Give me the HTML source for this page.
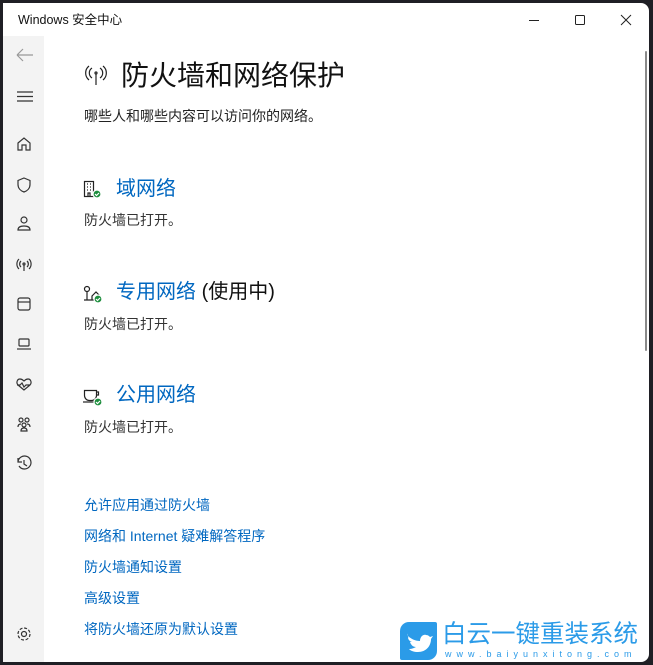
<!DOCTYPE html><html><head><meta charset="utf-8"><style>
*{margin:0;padding:0;box-sizing:border-box}
body{width:653px;height:665px;background:#1f1f25;position:relative;overflow:hidden;font-family:"Liberation Sans","Noto Sans CJK SC",sans-serif}
#win{position:absolute;left:3px;top:3px;width:646px;height:659px;background:#fff;border-radius:0 8px 8px 0;overflow:hidden}
#side{position:absolute;left:0;top:33px;width:41px;height:626px;background:#f3f3f3}
.t{position:absolute;white-space:nowrap;line-height:1}
.bl{color:#0067c0}
</style></head><body><div id="win">
<div class="t" style="left:15px;top:11px;font-size:12.5px;color:#111">Windows 安全中心</div>
<svg style="position:absolute;left:520px;top:7px" width="120" height="20" fill="none" stroke="#222" stroke-width="1">
<line x1="6" y1="10.5" x2="16" y2="10.5"/><rect x="52.5" y="5.5" width="9" height="9" rx="1"/><path d="M98 5l10 10M108 5l-10 10"/></svg>
<div id="side">
<svg width="41" height="660" fill="none" stroke="#333" stroke-width="1.2" style="position:absolute;left:0;top:-36px">
<path d="M14 55h16M14 55l6-6M14 55l6 6" stroke="#999"/>
<path d="M14 92h16M14 96.5h16M14 101h16"/>
<path d="M15 143l6-5 6 5v7h-4v-5h-4v5h-4z"/>
<path d="M21 178l6 2.5v4c0 4-3 6.5-6 7.5-3-1-6-3.5-6-7.5v-4z"/>
<circle cx="21" cy="220" r="3"/><path d="M15 230c0-3 3-4 6-4s6 1 6 4z"/>
<circle cx="21" cy="264" r="1"/><path d="M21 265v6M18 261a4 4 0 0 0 0 6M24 261a4 4 0 0 1 0 6M16 259a7 7 0 0 0 0 10M26 259a7 7 0 0 1 0 10"/>
<rect x="15" y="298" width="12" height="12" rx="2"/><path d="M15 302h12"/>
<rect x="16" y="339" width="10" height="7" rx="1"/><path d="M14 349h14"/>
<path d="M21 390l-6-5c-2-2-1-6 2-6 2 0 3 1 4 2 1-1 2-2 4-2 3 0 4 4 2 6zM14 385h3l2-2 2 4 2-2h4"/>
<circle cx="18" cy="420" r="2"/><circle cx="24" cy="420" r="2"/><circle cx="21" cy="425" r="2"/><path d="M15 427c0-2 1-3 3-3M27 427c0-2-1-3-3-3M18 431c0-2 1-3 3-3s3 1 3 3z"/>
<path d="M15 462a6.5 6.5 0 1 1 1 4M15 458v4h4M21 460v4l3 2"/>
<circle cx="21" cy="634" r="2.5"/><circle cx="21" cy="634" r="6" stroke-dasharray="3 1.7"/>
</svg></div>
<div style="position:absolute;left:642px;top:48px;width:2px;height:300px;background:#8a8a8a;border-radius:1px"></div>
<svg style="position:absolute;left:80px;top:60px" width="26" height="26" fill="none" stroke="#222" stroke-width="1.2">
<circle cx="13" cy="10" r="1"/><path d="M13 11v11M9 5a6 6 0 0 0 0 10M17 5a6 6 0 0 1 0 10M6 3a9 9 0 0 0 0 14M20 3a9 9 0 0 1 0 14"/></svg>
<div class="t" style="left:118px;top:59px;font-size:28px;color:#111">防火墙和网络保护</div>
<div class="t" style="left:81px;top:106px;font-size:14px;color:#222">哪些人和哪些内容可以访问你的网络。</div>

<svg style="position:absolute;left:80px;top:177px" width="22" height="20" fill="none" stroke="#222" stroke-width="1.2">
<rect x="1.5" y="1.5" width="9" height="15"/><path d="M4 4h1M7 4h1M4 7h1M7 7h1M4 10h1M7 10h1M5 16v-3h2v3"/><circle cx="14" cy="14" r="4" fill="#1e8e3e" stroke="#fff"/><path d="M12 14l1.5 1.5 2.5-2.5" stroke="#fff"/></svg>
<div class="t bl" style="left:113px;top:176px;font-size:20px">域网络</div>
<div class="t" style="left:81px;top:210px;font-size:14px;color:#333">防火墙已打开。</div>

<svg style="position:absolute;left:80px;top:281px" width="22" height="20" fill="none" stroke="#222" stroke-width="1.2">
<circle cx="4" cy="5" r="2.5"/><path d="M4 8v8M1 16h16M9 12l4-4 4 4v4h-8z"/><circle cx="15" cy="15" r="4" fill="#1e8e3e" stroke="#fff"/><path d="M13 15l1.5 1.5 2.5-2.5" stroke="#fff"/></svg>
<div class="t" style="left:113px;top:279px;font-size:20px"><span class="bl">专用网络</span> <span style="color:#111">(使用中)</span></div>
<div class="t" style="left:81px;top:314px;font-size:14px;color:#333">防火墙已打开。</div>

<svg style="position:absolute;left:80px;top:384px" width="22" height="20" fill="none" stroke="#222" stroke-width="1.2">
<path d="M1.5 3.5h12v5a5 5 0 0 1-5 5h-2a5 5 0 0 1-5-5zM13.5 5h2v3h-2"/><path d="M0 15h14"/><circle cx="15" cy="15" r="4" fill="#1e8e3e" stroke="#fff"/><path d="M13 15l1.5 1.5 2.5-2.5" stroke="#fff"/></svg>
<div class="t bl" style="left:113px;top:382px;font-size:20px">公用网络</div>
<div class="t" style="left:81px;top:417px;font-size:14px;color:#333">防火墙已打开。</div>

<div class="t bl" style="left:81px;top:495px;font-size:14px">允许应用通过防火墙</div>
<div class="t bl" style="left:81px;top:526px;font-size:14px">网络和 Internet 疑难解答程序</div>
<div class="t bl" style="left:81px;top:557px;font-size:14px">防火墙通知设置</div>
<div class="t bl" style="left:81px;top:588px;font-size:14px">高级设置</div>
<div class="t bl" style="left:81px;top:619px;font-size:14px">将防火墙还原为默认设置</div>

<div style="position:absolute;left:397px;top:619px;width:37px;height:38px;background:#2b9be8;border-radius:9px 2px 9px 2px"></div>
<svg style="position:absolute;left:402px;top:627px" width="28" height="24" fill="#fff"><path d="M2 5c4 4 8 6 13 6 0-4 3-7 6-6 2 0 3 1 4 2l3-1-2 3c0 7-5 13-13 13-4 0-7-1-9-3 3 0 5-1 7-2-3 0-5-2-6-5h2c-3-1-4-3-4-5l2 1c-2-1-3-3-3-5z"/></svg>
<div class="t" style="left:439px;top:620px;font-size:24.5px;color:#2b9be8">白云一键重装系统</div>
<div class="t" style="left:442px;top:647px;font-size:9px;color:#2b9be8;letter-spacing:5px">www.baiyunxitong.com</div>
</div></body></html>
